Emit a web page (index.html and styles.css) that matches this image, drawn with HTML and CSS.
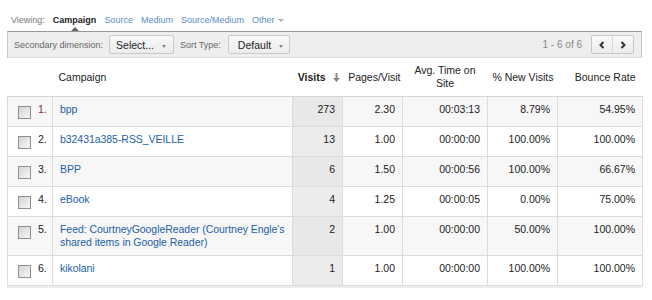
FILE: index.html
```html
<!DOCTYPE html>
<html lang="en">
<head>
    <meta charset="UTF-8">
    <title>Campaigns</title>
    <link rel="stylesheet" href="styles.css">
</head>
<body>
<div class="viewing">
    <span>Viewing:</span>
    <b class="current">Campaign<i class="tip"></i></b>
    <a href="#">Source</a>
    <a href="#">Medium</a>
    <a href="#">Source/Medium</a>
    <a href="#" class="other">Other <i class="down"></i></a>
</div>
<div class="report">
    <div class="toolbar">
        <span class="label">Secondary dimension:</span>
        <span class="btn">Select... <i class="caret"></i></span>
        <span class="label">Sort Type:</span>
        <span class="btn btn-sort">Default <i class="caret"></i></span>
        <span class="pager">1 - 6 of 6</span>
        <span class="nav">
            <span class="nav-btn"><svg width="6" height="8" viewBox="0 0 6 8"><polyline points="4.5,1 1.5,4 4.5,7" fill="none" stroke="#333" stroke-width="2"/></svg></span>
            <span class="nav-btn"><svg width="6" height="8" viewBox="0 0 6 8"><polyline points="1.5,1 4.5,4 1.5,7" fill="none" stroke="#333" stroke-width="2"/></svg></span>
        </span>
    </div>
    <table class="grid">
        <colgroup>
            <col class="c-idx"><col class="c-name"><col class="c-visits"><col class="c-pages">
            <col class="c-time"><col class="c-new"><col class="c-bounce">
        </colgroup>
        <thead>
        <tr>
            <th></th>
            <th class="h-name">Campaign</th>
            <th class="h-visits">Visits <svg width="9" height="9" viewBox="0 0 9 9"><path d="M3.5 0h2v5h2.5l-3.5 4-3.5-4h2.5z" fill="#8a8a8a"/></svg></th>
            <th class="h-pages">Pages/Visit</th>
            <th class="h-time">Avg. Time on Site</th>
            <th class="h-new">% New Visits</th>
            <th class="h-bounce">Bounce Rate</th>
        </tr>
        </thead>
        <tbody>
        <tr class="odd">
            <td class="idx"><span class="box"></span><span class="num first">1.</span></td>
            <td class="name"><a href="#">bpp</a></td>
            <td class="visits">273</td><td>2.30</td><td>00:03:13</td><td>8.79%</td><td>54.95%</td>
        </tr>
        <tr>
            <td class="idx"><span class="box"></span><span class="num">2.</span></td>
            <td class="name"><a href="#">b32431a385-RSS_VEILLE</a></td>
            <td class="visits">13</td><td>1.00</td><td>00:00:00</td><td>100.00%</td><td>100.00%</td>
        </tr>
        <tr class="odd">
            <td class="idx"><span class="box"></span><span class="num">3.</span></td>
            <td class="name"><a href="#">BPP</a></td>
            <td class="visits">6</td><td>1.50</td><td>00:00:56</td><td>100.00%</td><td>66.67%</td>
        </tr>
        <tr>
            <td class="idx"><span class="box"></span><span class="num">4.</span></td>
            <td class="name"><a href="#">eBook</a></td>
            <td class="visits">4</td><td>1.25</td><td>00:00:05</td><td>0.00%</td><td>75.00%</td>
        </tr>
        <tr class="odd">
            <td class="idx"><span class="box"></span><span class="num">5.</span></td>
            <td class="name"><a href="#">Feed: CourtneyGoogleReader (Courtney Engle's shared items in Google Reader)</a></td>
            <td class="visits">2</td><td>1.00</td><td>00:00:00</td><td>50.00%</td><td>100.00%</td>
        </tr>
        <tr>
            <td class="idx"><span class="box"></span><span class="num">6.</span></td>
            <td class="name"><a href="#">kikolani</a></td>
            <td class="visits">1</td><td>1.00</td><td>00:00:00</td><td>100.00%</td><td>100.00%</td>
        </tr>
        </tbody>
    </table>
    <div class="foot"></div>
</div>
</body>
</html>
```
FILE: styles.css
```css
* {
    margin: 0;
    padding: 0;
}

body {
    font-family: "Liberation Sans", Arial, sans-serif;
    color: #222;
    background: #fff;
}

a {
    text-decoration: none;
}

/* viewing line */
.viewing {
    height: 31px;
    box-sizing: border-box;
    padding: 15px 0 0 11px;
    display: flex;
    gap: 8px;
    font-size: 9px;
    line-height: 11px;
    color: #777;
}

.viewing a {
    color: #5a8dc6;
}

.viewing .current {
    position: relative;
    color: #222;
}

.viewing .tip {
    position: absolute;
    left: 50%;
    top: 12px;
    margin-left: -4px;
    border-left: 4px solid transparent;
    border-right: 4px solid transparent;
    border-bottom: 4px solid #666;
}

.viewing .down {
    display: inline-block;
    vertical-align: middle;
    margin-left: 1px;
    border-left: 3px solid transparent;
    border-right: 3px solid transparent;
    border-top: 3px solid #aaa;
}

/* report */
.report {
    margin-left: 7px;
    width: 635px;
}

.toolbar {
    height: 25px;
    display: flex;
    align-items: center;
    gap: 6px;
    padding-left: 6px;
    background: #eee;
    border-top: 1px solid #999;
    border-left: 1px solid #c8c8c8;
    border-right: 1px solid #c8c8c8;
    border-bottom: 1px solid #ddd;
}

.toolbar .label {
    font-size: 9px;
    color: #666;
}

.btn {
    height: 17px;
    display: inline-flex;
    align-items: center;
    padding: 0 7px 0 6px;
    border: 1px solid #c9c9c9;
    border-radius: 2px;
    background: linear-gradient(#f9f9f9, #ececec);
    font-size: 10.5px;
    color: #222;
}

.btn-sort {
    margin-left: 1px;
    padding-left: 9px;
    padding-right: 6px;
}

.btn .caret {
    margin-left: 8px;
    margin-top: 3px;
    border-left: 2.5px solid transparent;
    border-right: 2.5px solid transparent;
    border-top: 3px solid #888;
}

.pager {
    margin-left: auto;
    font-size: 10px;
    color: #888;
}

.nav {
    display: flex;
    margin: 0 7px 0 3px;
    border: 1px solid #c6c6c6;
    border-radius: 2px;
    background: linear-gradient(#f9f9f9, #ececec);
}

.nav-btn {
    width: 20px;
    height: 17px;
    display: flex;
    align-items: center;
    justify-content: center;
}

.nav-btn + .nav-btn {
    border-left: 1px solid #d8d8d8;
}

/* grid */
.grid {
    width: 635px;
    table-layout: fixed;
    border-collapse: collapse;
    font-size: 10.5px;
    line-height: 13px;
}

.c-idx { width: 45px; }
.c-name { width: 240px; }
.c-visits { width: 50px; }
.c-pages { width: 60px; }
.c-time { width: 85px; }
.c-new { width: 70px; }
.c-bounce { width: 85px; }

.grid th {
    height: 38px;
    padding: 0 7px 0 0;
    font-weight: normal;
    text-align: right;
    vertical-align: middle;
    border-bottom: 1px solid #d6d6d6;
}

.grid .h-name {
    text-align: left;
    padding-left: 6px;
}

.grid .h-visits {
    font-weight: bold;
    padding-right: 2px;
}

.grid .h-visits svg {
    margin-left: 3px;
    vertical-align: -1px;
}

.grid .h-pages {
    padding-right: 2px;
}

.grid .h-time {
    text-align: center;
    padding: 0 9px;
}

.grid .h-new {
    padding-right: 4px;
}

.grid td {
    height: 17px;
    padding: 6px 7px;
    text-align: right;
    vertical-align: top;
    border: 1px solid #dcdcdc;
}

.grid tr.odd td {
    background: #f7f7f7;
}

.grid td.visits {
    background: #ececec;
}

.grid tr.odd td.visits {
    background: #e8e8e8;
}

.grid td.idx {
    text-align: left;
    padding-left: 10px;
    padding-right: 0;
}

.grid td.name {
    text-align: left;
    padding-left: 7px;
    padding-right: 1px;
    letter-spacing: -0.05px;
}

.grid td.name a {
    color: #215fa6;
}

.box {
    display: inline-block;
    vertical-align: top;
    width: 11px;
    height: 11px;
    margin-top: 3px;
    margin-right: 7px;
    border: 1px solid #8f8f8f;
    background: linear-gradient(135deg, #d4d4d4, #f7f7f7);
}

.num.first {
    color: #8a1f56;
}

.foot {
    height: 2px;
    background: #ececec;
}
```
